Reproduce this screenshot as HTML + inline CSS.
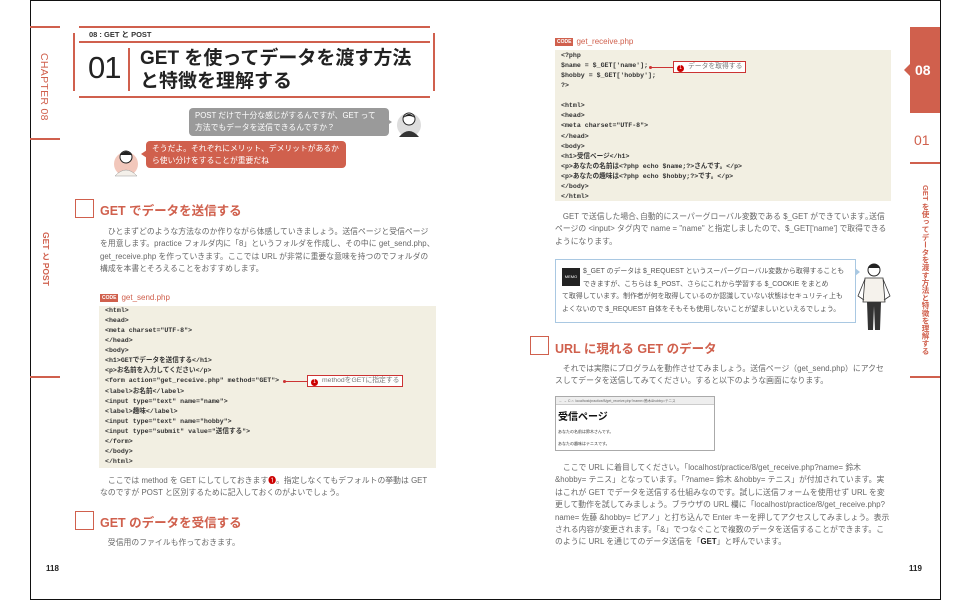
<!DOCTYPE html>
<html><head><meta charset="utf-8">
<style>
*{margin:0;padding:0;box-sizing:border-box}
body{width:970px;height:600px;background:#fff;position:relative;overflow:hidden;font-family:"Liberation Sans","Noto Sans CJK JP",sans-serif;color:#555}
.a{position:absolute}
.frame{left:30px;top:0;width:911px;height:600px;border:1.5px solid #111}
.rl{background:#d0604d;height:2px}
.vt{writing-mode:vertical-rl;color:#d0604d;white-space:nowrap}
.p{font-size:7.8px;line-height:12.4px;color:#666;letter-spacing:.05px}
.h{color:#d0604d;font-size:12.5px;font-weight:bold;white-space:nowrap}
.sq{width:19px;height:19px;border:1.5px solid #d0604d}
.code{background:#f2efe2;font-family:"Liberation Mono","Noto Sans CJK JP",monospace;font-size:6.6px;font-weight:bold;line-height:10.07px;color:#333;white-space:pre}
.lab{font-size:8px;color:#d0604d;white-space:nowrap}
.lab b{background:#d0604d;color:#fff;font-size:5px;padding:1px 2px;margin-right:3px;vertical-align:1px}
.ann{border:1px solid #c33;background:#fff;font-size:6.8px;color:#777;white-space:nowrap;padding:0 3px;line-height:10px}
.ann i{display:inline-block;width:7px;height:7px;border-radius:50%;background:#c00;color:#fff;font-style:normal;font-size:5px;text-align:center;line-height:7px;margin-right:4px;vertical-align:-1px}
.ln{height:1px;background:#c33}
.dot{width:3px;height:3px;border-radius:50%;background:#c33}
.memo{font-size:6.9px;line-height:12.5px;color:#555;white-space:nowrap}
</style></head><body>
<div class="a frame"></div>

<div class="a rl" style="left:30px;top:26px;width:30px"></div>
<div class="a vt" style="left:38px;top:53px;font-size:10.5px;letter-spacing:.3px">CHAPTER 08</div>
<div class="a rl" style="left:30px;top:138px;width:30px"></div>
<div class="a vt" style="left:40px;top:232px;font-size:8.5px;font-weight:bold">GET と POST</div>
<div class="a rl" style="left:30px;top:376px;width:30px"></div>

<div class="a rl" style="left:79px;top:26px;width:351px"></div>
<div class="a" style="left:89px;top:29px;font-size:7.5px;font-weight:bold;color:#333">08 : GET と POST</div>
<div class="a rl" style="left:79px;top:41px;width:351px"></div>
<div class="a rl" style="left:79px;top:96px;width:351px"></div>
<div class="a" style="left:73px;top:33px;width:2px;height:58px;background:#d0604d"></div>
<div class="a" style="left:433px;top:33px;width:2px;height:58px;background:#d0604d"></div>
<div class="a" style="left:88px;top:50px;font-size:31px;color:#222;letter-spacing:-1px">01</div>
<div class="a" style="left:128px;top:48px;width:2px;height:43px;background:#d0604d"></div>
<div class="a" style="left:140px;top:47px;font-size:19px;line-height:23px;color:#222;font-weight:bold;white-space:nowrap">GET を使ってデータを渡す方法<br>と特徴を理解する</div>

<div class="a" style="left:189px;top:108px;width:200px;height:28px;background:#9a9a9a;border-radius:4px;color:#fff;font-size:7.8px;line-height:12px;padding:2px 6px">POST だけで十分な感じがするんですが、GET って方法でもデータを送信できるんですか？</div>
<div class="a" style="left:386px;top:118px;width:0;height:0;border-left:6px solid #9a9a9a;border-top:4px solid transparent;border-bottom:4px solid transparent"></div>
<svg class="a" style="left:395px;top:106px" width="28" height="34"><circle cx="14" cy="19" r="12" fill="#ddd"/><circle cx="14" cy="13" r="6" fill="#fff" stroke="#222"/><path d="M8 12 Q14 4 20 12 Q14 8 8 12Z" fill="#222"/><path d="M4 31 Q14 19 24 31 Z" fill="#333"/></svg>
<div class="a" style="left:146px;top:141px;width:200px;height:27px;background:#d0604d;border-radius:4px;color:#fff;font-size:7.8px;line-height:12px;padding:2px 6px">そうだよ。それぞれにメリット、デメリットがあるから使い分けをすることが重要だね</div>
<div class="a" style="left:141px;top:150px;width:0;height:0;border-right:6px solid #d0604d;border-top:4px solid transparent;border-bottom:4px solid transparent"></div>
<svg class="a" style="left:112px;top:144px" width="28" height="34"><circle cx="14" cy="20" r="12" fill="#f2c7bb"/><circle cx="14" cy="13" r="6" fill="#fff" stroke="#222"/><path d="M8 11 Q14 4 20 11 Z" fill="#222"/><path d="M3 32 Q14 20 25 32 Z" fill="#f4f0ea" stroke="#999" stroke-width=".5"/></svg>

<div class="a sq" style="left:75px;top:199px"></div>
<div class="a h" style="left:100px;top:200px">GET でデータを送信する</div>
<div class="a p" style="left:100px;top:226px;width:336px">　ひとまずどのような方法なのか作りながら体感していきましょう。送信ページと受信ページを用意します。practice フォルダ内に「8」というフォルダを作成し、その中に get_send.php、get_receive.php を作っていきます。ここでは URL が非常に重要な意味を持つのでフォルダの構成を本書とそろえることをおすすめします。</div>

<div class="a lab" style="left:100px;top:293px"><b>CODE</b>get_send.php</div>
<div class="a code" style="left:99px;top:306px;width:337px;height:162px;padding:0 6px">&lt;html&gt;
&lt;head&gt;
&lt;meta charset="UTF-8"&gt;
&lt;/head&gt;
&lt;body&gt;
&lt;h1&gt;GETでデータを送信する&lt;/h1&gt;
&lt;p&gt;お名前を入力してください&lt;/p&gt;
&lt;form action="get_receive.php" method="GET"&gt;
&lt;label&gt;お名前&lt;/label&gt;
&lt;input type="text" name="name"&gt;
&lt;label&gt;趣味&lt;/label&gt;
&lt;input type="text" name="hobby"&gt;
&lt;input type="submit" value="送信する"&gt;
&lt;/form&gt;
&lt;/body&gt;
&lt;/html&gt;</div>
<div class="a dot" style="left:283px;top:380px"></div>
<div class="a ln" style="left:285px;top:381px;width:22px"></div>
<div class="a ann" style="left:307px;top:375px;height:12px"><i>1</i>methodをGETに指定する</div>

<div class="a p" style="left:100px;top:475px;width:336px">　ここでは method を GET にしてしておきます<span style="color:#c00">❶</span>。指定しなくてもデフォルトの挙動は GET なのですが POST と区別するために記入しておくのがよいでしょう。</div>
<div class="a sq" style="left:75px;top:511px"></div>
<div class="a h" style="left:100px;top:512px">GET のデータを受信する</div>
<div class="a p" style="left:100px;top:537px">　受信用のファイルも作っておきます。</div>
<div class="a" style="left:46px;top:564px;font-size:8px;font-weight:bold;color:#222">118</div>

<div class="a lab" style="left:555px;top:37px"><b>CODE</b>get_receive.php</div>
<div class="a code" style="left:555px;top:50px;width:336px;height:151px;padding:1px 6px">&lt;?php
$name = $_GET['name'];
$hobby = $_GET['hobby'];
?&gt;

&lt;html&gt;
&lt;head&gt;
&lt;meta charset="UTF-8"&gt;
&lt;/head&gt;
&lt;body&gt;
&lt;h1&gt;受信ページ&lt;/h1&gt;
&lt;p&gt;あなたの名前は&lt;?php echo $name;?&gt;さんです。&lt;/p&gt;
&lt;p&gt;あなたの趣味は&lt;?php echo $hobby;?&gt;です。&lt;/p&gt;
&lt;/body&gt;
&lt;/html&gt;</div>
<div class="a dot" style="left:649px;top:66px"></div>
<div class="a ln" style="left:651px;top:67px;width:22px"></div>
<div class="a ann" style="left:673px;top:61px;height:12px"><i>1</i>データを取得する</div>

<div class="a p" style="left:555px;top:211px;width:336px">　GET で送信した場合､自動的にスーパーグローバル変数である $_GET ができています｡送信ページの &lt;input&gt; タグ内で name = "name" と指定しましたので、$_GET['name'] で取得できるようになります。</div>

<div class="a" style="left:555px;top:259px;width:301px;height:64px;border:1px solid #a9c8e2"></div>
<div class="a" style="left:855px;top:268px;width:0;height:0;border-left:5px solid #a9c8e2;border-top:4px solid transparent;border-bottom:4px solid transparent"></div>
<div class="a" style="left:562px;top:268px;width:18px;height:18px;background:#222;color:#fff;font-size:4px;text-align:center;line-height:18px">MEMO</div>
<div class="a memo" style="left:583px;top:266px">$_GET のデータは $_REQUEST というスーパーグローバル変数から取得することも<br>できますが、こちらは $_POST、さらにこれから学習する $_COOKIE をまとめ</div>
<div class="a memo" style="left:562px;top:291px">て取得しています。制作者が何を取得しているのか認識していない状態はセキュリティ上も<br>よくないので $_REQUEST 自体をそもそも使用しないことが望ましいといえるでしょう。</div>
<svg class="a" style="left:856px;top:260px" width="36" height="74"><circle cx="18" cy="10" r="6" fill="#fff" stroke="#222"/><path d="M12 8 Q18 0 24 8Z" fill="#222"/><path d="M9 18 L27 18 L29 42 L7 42Z" fill="#f5f2ec" stroke="#333" stroke-width=".8"/><path d="M9 19 L2 36 L8 40 M27 19 L34 36 L28 40" fill="none" stroke="#333" stroke-width=".8"/><path d="M11 42 L12 70 L17 70 L18 46 L19 70 L24 70 L25 42Z" fill="#333"/></svg>

<div class="a sq" style="left:530px;top:336px"></div>
<div class="a h" style="left:555px;top:338px">URL に現れる GET のデータ</div>
<div class="a p" style="left:555px;top:363px;width:336px">　それでは実際にプログラムを動作させてみましょう。送信ページ（get_send.php）にアクセスしてデータを送信してみてください。すると以下のような画面になります。</div>

<div class="a" style="left:555px;top:396px;width:160px;height:55px;border:1px solid #aaa;background:#fff">
<div style="height:8px;background:#eee;border-bottom:1px solid #ccc;font-size:3.5px;color:#666;padding-left:3px;line-height:8px">← → C ⌂ &nbsp;localhost/practice/8/get_receive.php?name=鈴木&amp;hobby=テニス</div>
<div style="font-size:10px;font-weight:bold;color:#111;padding:3px 0 0 2px">受信ページ</div>
<div style="font-size:4px;color:#333;padding:6px 0 0 2px">あなたの名前は鈴木さんです。</div>
<div style="font-size:4px;color:#333;padding:6px 0 0 2px">あなたの趣味はテニスです。</div>
</div>

<div class="a p" style="left:555px;top:462px;width:336px">　ここで URL に着目してください。「localhost/practice/8/get_receive.php?name= 鈴木 &amp;hobby= テニス」となっています。「?name= 鈴木 &amp;hobby= テニス」が付加されています。実はこれが GET でデータを送信する仕組みなのです。試しに送信フォームを使用せず URL を変更して動作を試してみましょう。ブラウザの URL 欄に「localhost/practice/8/get_receive.php?name= 佐藤 &amp;hobby= ピアノ」と打ち込んで Enter キーを押してアクセスしてみましょう。表示される内容が変更されます。「&amp;」でつなぐことで複数のデータを送信することができます。このように URL を通じてのデータ送信を「<b style="color:#222">GET</b>」と呼んでいます。</div>
<div class="a" style="left:909px;top:564px;font-size:8px;font-weight:bold;color:#222">119</div>

<div class="a" style="left:910px;top:27px;width:30px;height:86px;background:#d0604d"></div>
<div class="a" style="left:904px;top:64px;width:0;height:0;border-right:6px solid #d0604d;border-top:6px solid transparent;border-bottom:6px solid transparent"></div>
<div class="a" style="left:915px;top:62px;font-size:14px;font-weight:bold;color:#fff">08</div>
<div class="a" style="left:914px;top:132px;font-size:14px;color:#d0604d">01</div>
<div class="a rl" style="left:910px;top:162px;width:30px"></div>
<div class="a vt" style="left:920px;top:185px;font-size:7.6px;font-weight:bold">GET を使ってデータを渡す方法と特徴を理解する</div>
<div class="a rl" style="left:910px;top:376px;width:30px"></div>
</body></html>
